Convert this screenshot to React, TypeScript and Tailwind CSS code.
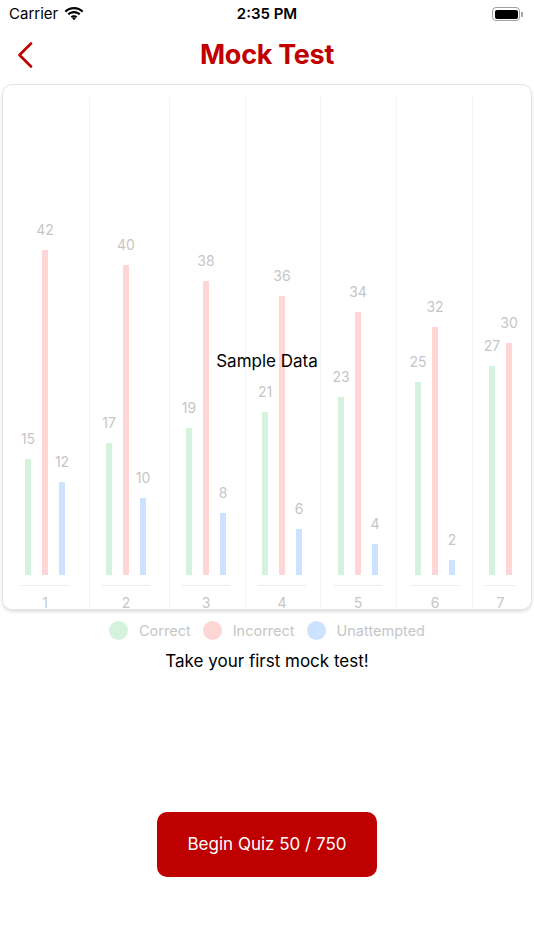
const PX_PER_UNIT = 7.74;

const barColors = ["bg-[#d5f3dc]", "bg-[#ffd6d6]", "bg-[#cce2ff]"];

// sample data shown before the first attempt
const groups = [
  { label: "1", values: [15, 42, 12], cls: "w-[87px] pl-[18px]" },
  { label: "2", values: [17, 40, 10], cls: "w-[80px] pl-[12px]" },
  { label: "3", values: [19, 38, 8], cls: "w-[76px] pl-[12px]" },
  { label: "4", values: [21, 36, 6], cls: "w-[75px] pl-[12px]" },
  { label: "5", values: [23, 34, 4], cls: "w-[76px] pl-[13px]" },
  { label: "6", values: [25, 32, 2], cls: "w-[76px] pl-[14px]" },
  { label: "7", values: [27, 30], cls: "w-[76px] pl-[12px]" },
];

const legend = [
  { name: "Correct", color: "bg-[#d5f3dc]" },
  { name: "Incorrect", color: "bg-[#ffd6d6]" },
  { name: "Unattempted", color: "bg-[#cce2ff]" },
];

function Wifi() {
  return (
    <svg width="20" height="14" viewBox="0 0 20 14" fill="black">
      <path d="M10 2.2c3 0 5.8 1.2 7.9 3.2l1.5-1.6C16.9 1.4 13.6 0 10 0S3.1 1.4.6 3.8l1.5 1.6C4.2 3.4 7 2.2 10 2.2z" />
      <path d="M10 6.3c1.9 0 3.6.7 4.9 1.9l1.5-1.6C14.7 5 12.4 4.1 10 4.1S5.3 5 3.6 6.6l1.5 1.6C6.4 7 8.1 6.3 10 6.3z" />
      <path d="M10 10.3c.8 0 1.5.3 2 .8L10 13.3 8 11.1c.5-.5 1.2-.8 2-.8z" />
      <path d="M10 8.2c1.3 0 2.4.5 3.3 1.3L12 10.9c-.5-.5-1.2-.8-2-.8s-1.5.3-2 .8L6.7 9.5C7.6 8.7 8.7 8.2 10 8.2z" />
    </svg>
  );
}

function Battery() {
  return (
    <div className="flex items-center">
      <div className="w-[28px] h-[14px] rounded-[4px] border border-[#a0a0a0] p-[1.5px]">
        <div className="w-full h-full rounded-[2px] bg-black" />
      </div>
      <div className="w-[2px] h-[5px] rounded-r-[1px] bg-[#a0a0a0] ml-[1px]" />
    </div>
  );
}

function BackChevron() {
  return (
    <svg width="16" height="26" viewBox="0 0 16 26" fill="none" stroke="#c00000" strokeWidth="2.6" strokeLinecap="round" strokeLinejoin="round">
      <path d="M14 1.5 2.5 13 14 24.5" />
    </svg>
  );
}

function BarGroup({ label, values, cls }) {
  return (
    <div className={`${cls} shrink-0 flex flex-col items-start border-r border-[#f3f3f3]`}>
      <div className="flex flex-col items-center">
        <div className="px-[4px] pb-[10px] border-b border-[#ececec]">
          <div className="h-[478px] flex items-end gap-[11px]">
            {values.map((v, i) => (
              <div key={i} className="w-[6px] flex flex-col items-center">
                <span className="whitespace-nowrap text-[14px] leading-[17px] text-[#c6c6c6] mb-[12px]">
                  {v}
                </span>
                <div className={`w-[6px] ${barColors[i]}`} style={{ height: v * PX_PER_UNIT }} />
              </div>
            ))}
          </div>
        </div>
        <span className="mt-[8px] text-[14px] leading-[17px] text-[#c6c6c6]">{label}</span>
      </div>
    </div>
  );
}

export default function App() {
  return (
    <div className="w-[534px] h-[950px] bg-white flex flex-col font-['Inter',sans-serif] text-black">
      {/* Status bar */}
      <div className="h-[28px] px-[9px] flex items-center justify-between">
        <div className="flex items-center gap-[6px] w-[120px]">
          <span className="text-[15px]">Carrier</span>
          <Wifi />
        </div>
        <span className="text-[15px] font-semibold">2:35 PM</span>
        <div className="w-[120px] flex justify-end pr-[2px]">
          <Battery />
        </div>
      </div>

      {/* Header */}
      <div className="h-[56px] relative flex items-center justify-center">
        <div className="absolute left-[17px] top-[14px]">
          <BackChevron />
        </div>
        <h1 className="text-[27px] font-bold text-[#c00000] tracking-[-0.3px] -mt-[2px]">Mock Test</h1>
      </div>

      {/* Chart card */}
      <div className="mx-[2px] h-[526px] relative rounded-[10px] border border-[#e4e4e4] shadow-[0_2px_3px_rgba(0,0,0,0.12)] overflow-hidden">
        <div className="flex pt-[12px]">
          {groups.map((g) => (
            <BarGroup key={g.label} {...g} />
          ))}
        </div>
        <div className="absolute left-0 right-0 top-[264px] text-center text-[17px]">Sample Data</div>
      </div>

      {/* Legend */}
      <div className="mt-[10px] flex items-center justify-center gap-[12px]">
        {legend.map((l) => (
          <div key={l.name} className="flex items-center gap-[11px]">
            <div className={`w-[19px] h-[19px] rounded-full ${l.color}`} />
            <span className="text-[14.5px] text-[#c6c6c6]">{l.name}</span>
          </div>
        ))}
      </div>

      <p className="mt-[7px] text-center text-[17px]">Take your first mock test!</p>

      <div className="mt-[138px] flex justify-center">
        <button className="w-[220px] h-[65px] rounded-[10px] bg-[#be0000] text-white text-[17px]">
          Begin Quiz 50 / 750
        </button>
      </div>
    </div>
  );
}
